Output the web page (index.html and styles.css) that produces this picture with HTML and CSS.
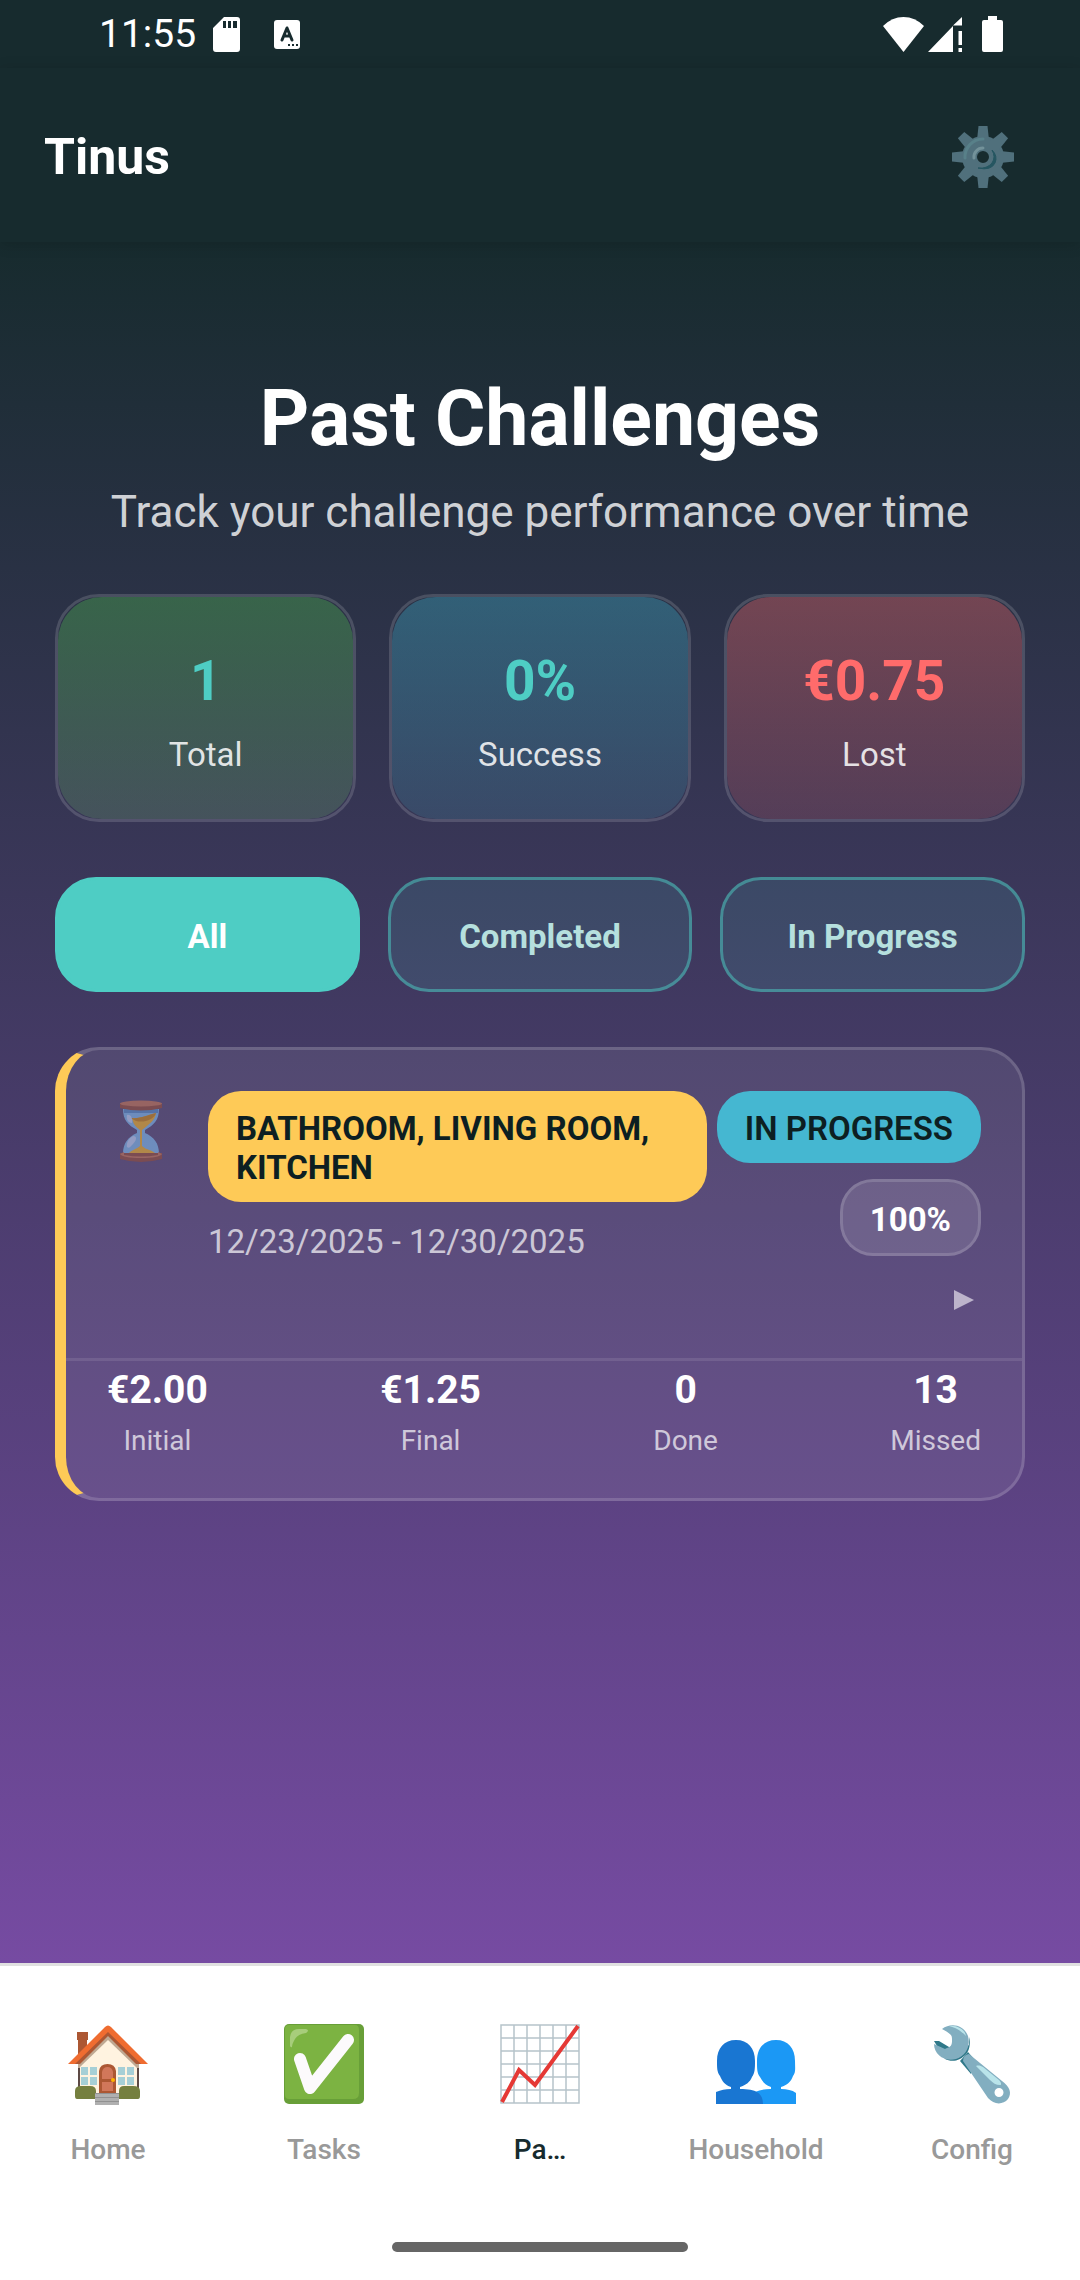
FILE: index.html
```html
<!DOCTYPE html>
<html lang="en">
<head>
  <meta charset="UTF-8" />
  <meta name="viewport" content="width=device-width, initial-scale=1.0"/>
  <title>Past Challenges</title>

  <link rel="stylesheet" href="styles.css">
</head>
<body>
  <!-- Status bar -->
  <div class="status-bar">
    <div class="status-left">
      <span class="clock">11:55</span>
      <svg class="sd-icon" width="27" height="35" viewBox="0 0 27 35" aria-hidden="true">
        <path fill="#fff" fill-rule="evenodd" d="M11 0h13a3 3 0 0 1 3 3v29a3 3 0 0 1-3 3H3a3 3 0 0 1-3-3V11zM10 4v7h3V4zM15 4v7h3V4zM20 4v7h4V4z"/>
      </svg>
      <svg width="26" height="29" viewBox="0 0 26 29" aria-hidden="true">
        <rect width="26" height="29" rx="3" fill="#fff"/>
        <path d="M8 20l5-12 5 12M10 16h6" fill="none" stroke="#172b2e" stroke-width="3" stroke-linecap="round" stroke-linejoin="round"/>
        <path fill="#172b2e" d="M14 24h2v2h-2zM18 24h2v2h-2zM22 24h2v2h-2z"/>
      </svg>
    </div>
    <div class="status-right">
      <svg width="41" height="36" viewBox="0 0 41 36" aria-hidden="true">
        <path fill="#fff" d="M0 10Q9 1 20.500 1T41 10L20.500 36z"/>
      </svg>
      <svg width="35" height="36" viewBox="0 0 35 36" aria-hidden="true">
        <path fill="#fff" d="M0 36L25 10v26zM25 9.500L34 1v8.500zM30.500 15H34v14h-3.500zM30.500 32H34v4h-3.500z"/>
      </svg>
      <svg class="battery" width="21" height="36" viewBox="0 0 21 36" aria-hidden="true">
        <path fill="#fff" d="M6 0h9v4h4a2 2 0 0 1 2 2v28a2 2 0 0 1-2 2H2a2 2 0 0 1-2-2V6a2 2 0 0 1 2-2h4z"/>
      </svg>
    </div>
  </div>

  <header class="app-header">
    <span class="user-name">Tinus</span>
    <button class="settings-btn" aria-label="Settings">
      <svg width="62" height="62" viewBox="-31 -31 62 62" aria-hidden="true">
        <defs>
          <path id="tooth" d="M-6-17L-4.500-31h9L6-17z"/>
        </defs>
        <g fill="#50707c">
          <path fill-rule="evenodd" d="M0-21A21 21 0 1 1 0 21A21 21 0 1 1 0-21zM0-6A6 6 0 1 0 0 6A6 6 0 1 0 0-6z"/>
          <use href="#tooth"/>
          <use href="#tooth" transform="rotate(45)"/>
          <use href="#tooth" transform="rotate(90)"/>
          <use href="#tooth" transform="rotate(135)"/>
          <use href="#tooth" transform="rotate(180)"/>
          <use href="#tooth" transform="rotate(225)"/>
          <use href="#tooth" transform="rotate(270)"/>
          <use href="#tooth" transform="rotate(315)"/>
        </g>
        <path d="M-18 1A18 18 0 0 1 0-18" fill="none" stroke="#588089" stroke-width="3" stroke-linecap="round"/>
        <path d="M-9 1A9 9 0 0 1 0-9" fill="none" stroke="#73929a" stroke-width="3" stroke-linecap="round"/>
        <path d="M9-7Q15-1 12 6Q8 14-5 11Q4 12 9 6Q13 0 9-7z" fill="#255661" stroke="#255661"/>
      </svg>
    </button>
  </header>

  <main class="content">
    <h1>Past Challenges</h1>
    <p class="subtitle">Track your challenge performance over time</p>

    <!-- Summary cards -->
    <section class="stats">
      <div class="stat-card">
        <div class="stat-fill total">
          <span class="stat-number">1</span>
          <span class="stat-label">Total</span>
        </div>
      </div>
      <div class="stat-card">
        <div class="stat-fill success">
          <span class="stat-number">0%</span>
          <span class="stat-label">Success</span>
        </div>
      </div>
      <div class="stat-card">
        <div class="stat-fill lost">
          <span class="stat-number">€0.75</span>
          <span class="stat-label">Lost</span>
        </div>
      </div>
    </section>

    <div class="filters">
      <button class="filter-btn active">All</button>
      <button class="filter-btn">Completed</button>
      <button class="filter-btn">In Progress</button>
    </div>

    <!-- Challenge card -->
    <article class="challenge">
      <div class="challenge-head">
        <svg class="hourglass" width="42" height="62" viewBox="0 0 42 62" aria-hidden="true">
          <path fill="#78a9dc" d="M3 9h36c0 11-5 16-14 21v3c9 4 14 10 14 21v2H3v-2c0-11 5-17 14-21v-3C8 25 3 20 3 9z"/>
          <path fill="#5684bd" d="M4 9h34v4H4z"/>
          <path fill="#d8a236" d="M12 18c9 1 16-3 24-5-1 8-7 11-14 17v16c4 4 11 4 14 8v2H8v-2c3-4 9-5 12-8V30c-4-3-7-6-8-12z"/>
          <path fill="#b97e27" d="M11 18c9 1 16-3 25-5-2 8-18 12-25 5z"/>
          <path fill="#c2c9e8" d="M7 15c4-1 6 4 5 8-4 0-6-4-5-8zM13 36c5 0 3 5 0 8s-4 5-6 3c-1-4 2-9 6-11z" opacity=".7"/>
          <path fill="#8b4d43" d="M0 3h42v5Q21 13 0 8zM0 53h42v6Q21 65 0 59z"/>
          <ellipse cx="21" cy="3.500" rx="21" ry="3" fill="#b4705c"/>
          <path fill="#b4705c" d="M0 54l4-2v3q17 3 34 0v-3l4 2q-3 4-21 4T0 54z"/>
        </svg>
        <div class="challenge-info">
          <div class="badge rooms">BATHROOM, LIVING ROOM, KITCHEN</div>
          <div class="dates">12/23/2025 - 12/30/2025</div>
        </div>
        <div class="challenge-side">
          <div class="badge state">IN PROGRESS</div>
          <div class="percent">100%</div>
          <button class="expand-btn" aria-label="Show details">
            <svg width="20" height="20" viewBox="0 0 20 20" aria-hidden="true">
              <path fill="#bdb4cb" d="M0 0l20 10L0 20z"/>
            </svg>
          </button>
        </div>
      </div>
      <div class="challenge-stats">
        <div class="figure"><strong>€2.00</strong><span>Initial</span></div>
        <div class="figure"><strong>€1.25</strong><span>Final</span></div>
        <div class="figure"><strong>0</strong><span>Done</span></div>
        <div class="figure"><strong>13</strong><span>Missed</span></div>
      </div>
    </article>
  </main>

  <!-- Bottom tabs -->
  <nav class="tab-bar">
    <div class="tabs">
      <a class="tab" href="#home">
        <svg width="80" height="80" viewBox="0 0 80 80" aria-hidden="true">
          <path fill="#ac5733" d="M9 8h11v8h-1v16l-9 9V16H9z"/>
          <path fill="#5d4a45" d="M10 40h3v30h-3zM68 40h3v30h-3z"/>
          <path fill="#bfa993" d="M10 38L40 8l31 31v5H10z"/>
          <path fill="#fff3e0" d="M12 43L40 16l29 28v26H12z"/>
          <path fill="#ac5733" d="M5 40L40 7l35 33h-7L40 12 12 40z"/>
          <path fill="#ef6c30" d="M0 40L37 3q3-3 6 0l37 37h-7L40 8 7 40z"/>
          <path fill="#a6cfd6" d="M13 43h7v8h-7zM22 43h7v8h-7zM13 53h7v8h-7zM22 53h7v8h-7zM50 43h7v8h-7zM59 43h7v8h-7zM50 53h7v8h-7zM59 53h7v8h-7z"/>
          <path fill="#ac5733" d="M31 70V47q1-7 8.500-7t8.500 7v23z"/>
          <path fill="#d1775a" d="M34 55v-7q1-5 5.500-5t5.500 5v7zM34 58h11v9H34z"/>
          <circle cx="45" cy="56" r="2" fill="#ffb300"/>
          <path fill="#757f3f" d="M7 72v-5q0-5 6-5h9q6 0 6 5v8H9q-2 0-2-3zM51 75v-8q0-5 5-5h9q7 0 7 5v5q0 3-2 3z"/>
          <path fill="#b0b0b0" d="M27 69h24v12H27z"/>
          <path fill="#919191" d="M27 69h24v1H27zM27 73h24v1H27zM27 77h24v1H27z"/>
        </svg>
        <span>Home</span>
      </a>
      <a class="tab" href="#tasks">
        <svg width="80" height="80" viewBox="0 0 80 80" aria-hidden="true">
          <rect width="80" height="80" rx="5" fill="#689f38"/>
          <path fill="#7cb342" d="M5 1h66q4 0 4 5v63q0 6-6 6H5q-4 0-4-4V5q0-4 4-4z"/>
          <path d="M16 35l10 29L64 16" fill="none" stroke="#fcfafc" stroke-width="12" stroke-linecap="round" stroke-linejoin="round"/>
          <path fill="#a7cd7b" d="M6 22V13Q7 5 15 5h7q4 1 0 4-8 1-11 6T8 23q-1 1-2-1z"/>
        </svg>
        <span>Tasks</span>
      </a>
      <a class="tab current" href="#past">
        <svg width="80" height="80" viewBox="0 0 80 80" aria-hidden="true">
          <path d="M1 1h78v78H1zM14 1v78M27 1v78M40 1v78M53 1v78M66 1v78M1 14h78M1 27h78M1 40h78M1 53h78M1 66h78" fill="none" stroke="#b6c4ca" stroke-width="1.500"/>
          <path d="M2 78L19 46l16 15L78 2" fill="none" stroke="#e53935" stroke-width="4"/>
        </svg>
        <span>Pa…</span>
      </a>
      <a class="tab" href="#household">
        <svg width="80" height="80" viewBox="0 0 80 80" aria-hidden="true">
          <path fill="#1b98f5" d="M60 16c12 0 19 8 19 21 0 7 1 11-2 15-2 6-6 9-12 11v2c6 0 11 1 15 4v11H39V68c5-2 10-3 16-3v-2c-6-2-8-5-11-10-3-4-3-8-3-16 0-13 7-21 19-21z"/>
          <path fill="#1976d2" d="M20 16c12 0 19 8 19 21 0 7 0 12-3 16-2 5-6 8-12 10v2c16 0 23 4 23 15H0V68c5-2 9-3 15-3v-2c-6-2-9-6-11-11-3-4-3-8-3-15 0-13 7-21 19-21z"/>
        </svg>
        <span>Household</span>
      </a>
      <a class="tab" href="#config">
        <svg width="80" height="80" viewBox="0 0 80 80" aria-hidden="true">
          <path fill="#2f7889" d="M28 37l8-9 6 7-3 15z"/>
          <path fill="#2f7889" d="M2 17l5 0 10 6 4 6 16-8V13c2 7 0 13-2 16-7 9-16 9-22 6z"/>
          <path fill="#82aec0" d="M10 5C19-2 32 1 36 12c3 11-3 20-12 23C13 38 2 31 2 20l11 5c4-2 7-2 7-8 0-5 1-6-10-12z"/>
          <path fill="#82aec0" fill-rule="evenodd" d="M31 37q0-6 6-7l33 27c8 6 10 12 6 18-5 6-14 6-20-1zM67 64a4 4 0 1 0 0 9 4 4 0 1 0 0-9z"/>
          <path fill="#b9e4ea" d="M17 2c7-1 16 3 17 10-5-5-9-8-17-10zM44 42c3-1 5 0 7 1l16 13c2 2 3 5 1 5-4 0-7-2-10-5z"/>
        </svg>
        <span>Config</span>
      </a>
    </div>
    <div class="home-indicator"></div>
  </nav>
</body>
</html>
```

FILE: styles.css
```css
* {
  box-sizing: border-box;
}

body {
  margin: 0;
  min-height: 100vh;
  display: flex;
  flex-direction: column;
  font-family: Roboto, sans-serif;
  background: #172b2e;
  color: white;
}

h1, p {
  margin: 0;
}

button {
  margin: 0;
  padding: 0;
  border: none;
  background: none;
  font-family: inherit;
  color: inherit;
  cursor: pointer;
}

svg {
  display: block;
}

/* Status bar */
.status-bar {
  display: flex;
  justify-content: space-between;
  align-items: center;
  height: 68px;
  padding: 0 77px 0 99px;
}

.status-left,
.status-right {
  display: flex;
  align-items: center;
}

.clock {
  font-size: 39px;
  line-height: 46px;
}

.sd-icon {
  margin: 0 34px 0 17px;
}

.status-right {
  gap: 4px;
}

.battery {
  margin-left: 15px;
}

/* Header */
.app-header {
  position: relative;
  display: flex;
  justify-content: space-between;
  align-items: center;
  height: 174px;
  padding: 4px 66px 0 44px;
  background: #172b2e;
  box-shadow: 0 2px 14px rgba(0, 0, 0, 0.15);
}

.user-name {
  font-size: 50px;
  line-height: 60px;
  font-weight: 700;
}

/* Content */
.content {
  flex: 1;
  padding: 132px 55px 55px;
  background: linear-gradient(#172b2e, #764ba2);
}

h1 {
  font-size: 77px;
  line-height: 90px;
  font-weight: 700;
  text-align: center;
}

.subtitle {
  margin: 22px 0 56px;
  font-size: 44px;
  line-height: 52px;
  text-align: center;
  color: rgba(255, 255, 255, 0.8);
}

.stats {
  display: grid;
  grid-template-columns: repeat(3, 1fr);
  gap: 33px;
}

.stat-card {
  border: 3px solid rgba(255, 255, 255, 0.15);
  border-radius: 44px;
}

.stat-fill {
  display: flex;
  flex-direction: column;
  align-items: center;
  gap: 19px;
  padding: 51px 20px 42px;
  border-radius: 44px;
}

.total {
  background: linear-gradient(rgba(76, 175, 80, 0.4), rgba(125, 199, 120, 0.2));
}

.success {
  background: linear-gradient(rgba(63, 181, 210, 0.35), rgba(69, 154, 180, 0.2));
}

.lost {
  background: linear-gradient(rgba(255, 107, 107, 0.34), rgba(255, 107, 107, 0.15));
}

.stat-number {
  font-size: 55px;
  line-height: 66px;
  font-weight: 700;
  color: #4ecdc4;
}

.lost .stat-number {
  color: #ff6b6b;
}

.stat-label {
  font-size: 33px;
  line-height: 44px;
  color: rgba(255, 255, 255, 0.85);
}

.filters {
  display: grid;
  grid-template-columns: repeat(3, 1fr);
  gap: 28px;
  margin: 55px 0;
}

.filter-btn {
  padding: 37px 0 33px;
  border: 3px solid rgba(78, 205, 196, 0.5);
  border-radius: 41px;
  background: rgba(78, 205, 196, 0.12);
  font-size: 33px;
  line-height: 39px;
  font-weight: 700;
  color: #b6e0de;
}

.filter-btn.active {
  border-color: #4ecdc4;
  background: #4ecdc4;
  color: white;
}

/* Challenge card */
.challenge {
  border: 3px solid rgba(255, 255, 255, 0.15);
  border-left: 11px solid #feca57;
  border-radius: 44px;
  background: rgba(255, 255, 255, 0.08);
}

.challenge-head {
  display: flex;
  align-items: flex-start;
  padding: 41px 41px 36px;
  border-bottom: 3px solid rgba(255, 255, 255, 0.1);
}

.hourglass {
  flex: none;
  margin: 9px 46px 0 13px;
  opacity: 0.7;
}

.challenge-info {
  flex: 1;
  margin-right: 10px;
}

.badge {
  padding: 18px 28px 15px;
  border-radius: 33px;
  font-size: 33px;
  line-height: 39px;
  font-weight: 700;
  color: #0d1f22;
}

.rooms {
  background: #feca57;
}

.state {
  background: #45b7d1;
  font-weight: 600;
}

.dates {
  margin-top: 20px;
  font-size: 33px;
  line-height: 39px;
  color: rgba(255, 255, 255, 0.7);
}

.challenge-side {
  display: flex;
  flex-direction: column;
  align-items: flex-end;
}

.percent {
  margin-top: 16px;
  padding: 18px 27px 14px;
  border: 3px solid rgba(255, 255, 255, 0.15);
  border-radius: 33px;
  background: rgba(255, 255, 255, 0.12);
  font-size: 33px;
  line-height: 39px;
  font-weight: 700;
}

.expand-btn {
  margin-top: 22px;
  padding: 12px 7px;
}

.challenge-stats {
  display: flex;
  justify-content: space-between;
  padding: 6px 41px 40px;
}

.figure {
  display: flex;
  flex-direction: column;
  align-items: center;
  gap: 11px;
}

.figure strong {
  font-size: 39px;
  line-height: 46px;
  font-weight: 700;
}

.figure span {
  font-size: 28px;
  line-height: 34px;
  color: rgba(255, 255, 255, 0.7);
}

/* Bottom tabs */
.tab-bar {
  padding-bottom: 28px;
  border-top: 3px solid #e0e0e0;
  background: white;
}

.tabs {
  display: grid;
  grid-template-columns: repeat(5, 1fr);
  padding: 58px 0 75px;
}

.tab {
  display: flex;
  flex-direction: column;
  align-items: center;
  gap: 29px;
  font-size: 28px;
  line-height: 34px;
  font-weight: 500;
  text-decoration: none;
  color: #999;
}

.tab svg {
  overflow: visible;
}

.tab.current {
  color: #172b2e;
}

.home-indicator {
  width: 296px;
  height: 10px;
  margin: 0 auto;
  border-radius: 5px;
  background: #666;
}
```
